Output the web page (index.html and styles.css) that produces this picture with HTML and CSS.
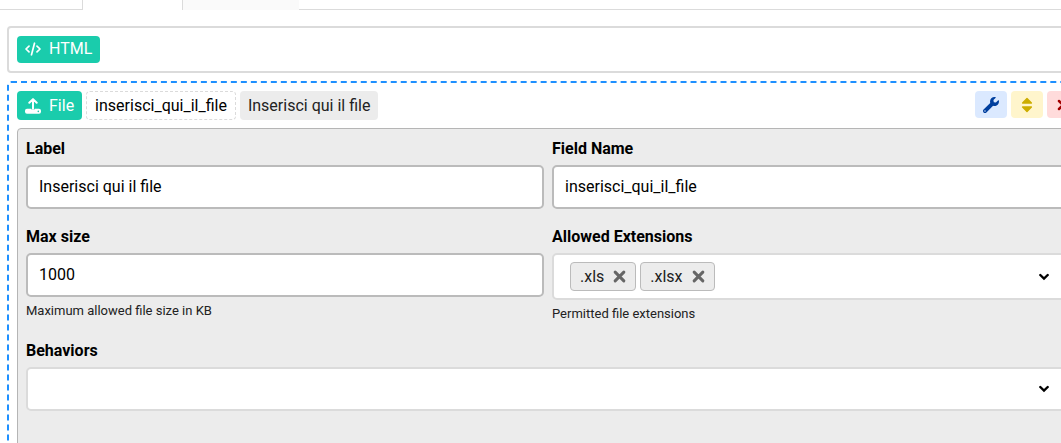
FILE: index.html
```html
<!DOCTYPE html>
<html lang="en">
<head>
<meta charset="utf-8">
<title>Form builder</title>
<link rel="stylesheet" href="styles.css">
</head>
<body>
<nav class="tabs" aria-label="Sections">
  <span class="tab-lead"></span>
  <span class="tab tab-active"></span>
  <span class="tab tab-idle"></span>
  <span class="tab-rest"></span>
</nav>
<main class="builder">
  <section class="card">
    <span class="badge badge-compact">
      <svg class="icon" viewBox="0 0 16 16" aria-hidden="true"><path d="M4 5.200 1 8l3 2.800M12 5.200 15 8l-3 2.800M9.500 2.200 6.500 13.800" fill="none" stroke="currentColor" stroke-width="1.700" stroke-linecap="round" stroke-linejoin="round"/></svg>
      HTML
    </span>
  </section>

  <section class="card card-selected">
    <header class="card-head">
      <span class="badge">
        <svg class="icon" viewBox="0 0 16 16" aria-hidden="true"><path d="M8 11V1.500M4.300 4.800 8 1.100 11.700 4.800" fill="none" stroke="currentColor" stroke-width="2" stroke-linecap="round" stroke-linejoin="round"/><path fill-rule="evenodd" d="M2 10.800h4.200a1.900 1.900 0 0 0 3.600 0H14a2 2 0 0 1 2 2v1a2 2 0 0 1-2 2H2a2 2 0 0 1-2-2v-1a2 2 0 0 1 2-2zM13.300 12.600a.8.8 0 1 0 0 1.600.8.8 0 0 0 0-1.600z" fill="currentColor"/></svg>
        File
      </span>
      <span class="chip chip-dashed">inserisci_qui_il_file</span>
      <span class="chip">Inserisci qui il file</span>
      <div class="actions">
        <button class="action action-edit" type="button" aria-label="Edit">
          <svg class="icon" viewBox="0 0 512 512" aria-hidden="true"><path fill="currentColor" d="M507.700 109.100c-2.200-9-13.500-12.100-20.100-5.500l-74.400 74.400-67.900-11.300L334 98.900l74.400-74.400c6.600-6.600 3.400-17.900-5.700-20.200-47.400-11.700-99.600.9-136.600 37.900-39.600 39.600-50.600 97.100-34.100 147.200L18.700 402.800c-25 25-25 65.500 0 90.500s65.500 25 90.500 0l213.200-213.200c50.100 16.700 107.500 5.700 147.400-34.200 37.100-37.100 49.700-89.300 37.900-136.800zM64 472c-13.200 0-24-10.800-24-24 0-13.300 10.700-24 24-24s24 10.700 24 24c0 13.200-10.700 24-24 24z"/></svg>
        </button>
        <button class="action action-move" type="button" aria-label="Move">
          <svg class="icon" viewBox="0 0 16 16" aria-hidden="true"><path d="M8 1.500 12.400 6.100H3.600zM3.600 9.900h8.800L8 14.500z" fill="currentColor" stroke="currentColor" stroke-width="1.400" stroke-linejoin="round"/></svg>
        </button>
        <button class="action action-delete" type="button" aria-label="Delete">
          <svg class="icon" viewBox="0 0 16 16" aria-hidden="true"><path d="m4 4 8 8M12 4l-8 8" stroke="currentColor" stroke-width="2.500" stroke-linecap="round"/></svg>
        </button>
      </div>
    </header>

    <form class="panel">
      <div class="field">
        <label class="label" for="label">Label</label>
        <input class="control" id="label" type="text" value="Inserisci qui il file">
      </div>
      <div class="field">
        <label class="label" for="name">Field Name</label>
        <input class="control" id="name" type="text" value="inserisci_qui_il_file">
      </div>
      <div class="field">
        <label class="label" for="size">Max size</label>
        <input class="control" id="size" type="text" value="1000">
        <small class="help">Maximum allowed file size in KB</small>
      </div>
      <div class="field">
        <label class="label" for="extensions">Allowed Extensions</label>
        <div class="tag-box">
          <span class="tag">.xls
            <button class="tag-remove" type="button" aria-label="Remove .xls"><svg class="cross" viewBox="0 0 12 12" aria-hidden="true"><path d="m2 2 8 8M10 2l-8 8" stroke="currentColor" stroke-width="2.800" stroke-linecap="round"/></svg></button>
          </span>
          <span class="tag">.xlsx
            <button class="tag-remove" type="button" aria-label="Remove .xlsx"><svg class="cross" viewBox="0 0 12 12" aria-hidden="true"><path d="m2 2 8 8M10 2l-8 8" stroke="currentColor" stroke-width="2.800" stroke-linecap="round"/></svg></button>
          </span>
          <button class="tag-open" id="extensions" type="button" aria-label="Show extensions"><svg class="chevron" viewBox="0 0 10 8" aria-hidden="true"><path d="M1.300 2 5 5.600 8.700 2" fill="none" stroke="currentColor" stroke-width="2.400" stroke-linecap="round"/></svg></button>
        </div>
        <small class="help">Permitted file extensions</small>
      </div>
      <div class="field field-wide">
        <label class="label" for="behaviors">Behaviors</label>
        <div class="select-wrap">
          <select class="control control-light" id="behaviors"><option></option></select>
          <svg class="chevron chevron-over" viewBox="0 0 10 8" aria-hidden="true"><path d="M1.300 2 5 5.600 8.700 2" fill="none" stroke="currentColor" stroke-width="2.400" stroke-linecap="round"/></svg>
        </div>
      </div>
    </form>
  </section>
</main>
</body>
</html>
```

FILE: styles.css
```css
* {
  box-sizing: border-box;
}

body {
  margin: 0;
  height: 100vh;
  overflow: hidden;
  background: #fff;
  color: #000;
  font: 16px/24px Roboto, sans-serif;
}

button,
input,
select {
  font: inherit;
  color: inherit;
}

.tabs {
  display: flex;
  height: 10px;
}

.tab-lead,
.tab-rest {
  border-bottom: 1px solid #dbdbdb;
}

.tab-lead {
  width: 82px;
}

.tab-rest {
  flex: 1;
}

.tab-active {
  width: 101px;
  border: solid #dbdbdb;
  border-width: 0 1px;
}

.tab-idle {
  width: 116px;
  background: #fafafa;
}

/* The workspace is wider than the window and runs off its right edge. */
.builder {
  display: flex;
  flex-direction: column;
  gap: 8px;
  margin: 16px -28px 0 7px;
}

.card {
  display: flex;
  flex-direction: column;
  align-items: flex-start;
  padding: 8px;
  border: 2px solid #dbdbdb;
  border-radius: 4px;
}

.card-selected {
  align-items: stretch;
  gap: 8px;
  border: 2px dashed #1e90ff;
}

.card-head {
  display: flex;
  align-items: flex-start;
  gap: 4px;
}

.badge,
.chip {
  display: flex;
  align-items: center;
  height: 29px;
  padding: 0 8px;
  border-radius: 4px;
  white-space: nowrap;
}

.badge {
  gap: 8px;
  background: #1accac;
  color: #fff;
}

.badge-compact {
  height: 27px;
  padding-bottom: 2px;
}

.chip {
  background: #ececec;
  color: #222;
}

.chip-dashed {
  border: 1px dashed #dbdbdb;
  background: #fff;
  color: #000;
}

.icon {
  display: block;
  width: 16px;
  height: 16px;
}

.actions {
  display: flex;
  gap: 4px;
  margin-left: auto;
}

.action {
  display: flex;
  align-items: center;
  justify-content: center;
  width: 32px;
  height: 27px;
  padding: 0;
  border: 0;
  border-radius: 4px;
}

.action-edit {
  background: #dbe9ff;
  color: #003f9e;
}

.action-move {
  background: #fff5cc;
  color: #ccad00;
}

.action-delete {
  background: #ffdbdb;
  color: #a30000;
}

.panel {
  display: grid;
  grid-template-columns: 1fr 1fr;
  gap: 16px 8px;
  padding: 8px 8px 48px;
  border: 1px solid #b5b5b5;
  border-radius: 4px;
  background: #ececec;
}

.field {
  display: flex;
  flex-direction: column;
  min-width: 0;
}

.field-wide {
  grid-column: 1 / -1;
}

.label {
  margin-bottom: 4px;
  font-weight: 700;
}

.control {
  display: block;
  width: 100%;
  height: 44px;
  padding: 0 11px 2px;
  border: 2px solid #bbb;
  border-radius: 5px;
  background: #fff;
}

.control-light {
  appearance: none;
  border-color: #dbdbdb;
}

.help {
  margin-top: 4px;
  font-size: 13px;
  line-height: 19px;
  color: #222;
}

.tag-box {
  display: flex;
  align-items: center;
  gap: 4px;
  height: 47px;
  padding: 0 16px;
  border: 2px solid #dbdbdb;
  border-radius: 5px;
  background: #fff;
}

.tag {
  display: flex;
  align-items: center;
  gap: 9px;
  height: 29px;
  padding: 0 9px;
  border: 1px solid #bbb;
  border-radius: 4px;
  background: #ececec;
  color: #222;
}

.tag-remove,
.tag-open {
  display: flex;
  padding: 0;
  border: 0;
  background: none;
}

.tag-remove {
  color: #666;
}

.tag-open {
  margin-left: auto;
  padding-right: 3px;
}

.cross {
  width: 13px;
  height: 13px;
}

.chevron {
  width: 10px;
  height: 8px;
}

.select-wrap {
  position: relative;
}

.chevron-over {
  position: absolute;
  top: 18px;
  right: 21px;
  pointer-events: none;
}
```
